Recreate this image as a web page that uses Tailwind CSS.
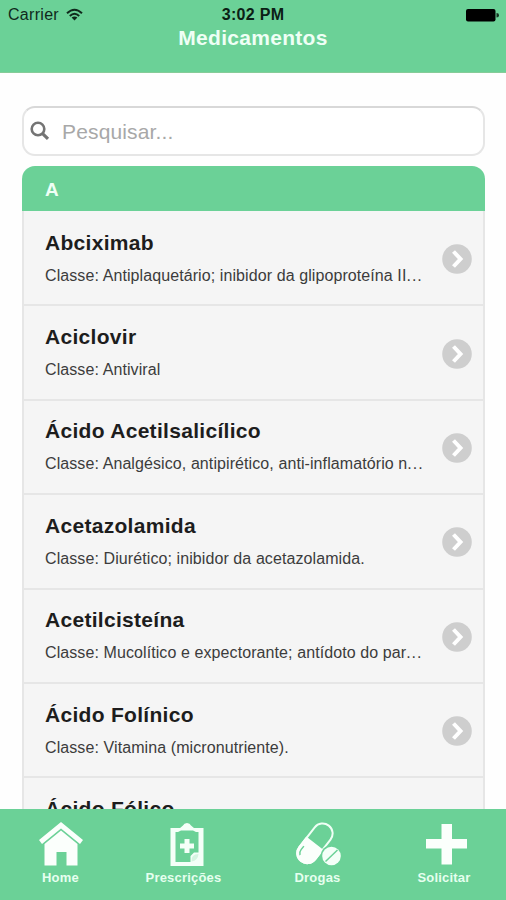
<!DOCTYPE html>
<html lang="pt">
<head>
<meta charset="utf-8">
<title>Medicamentos</title>
<script src="https://cdn.jsdelivr.net/npm/@tailwindcss/browser@4"></script>
</head>
<body class="bg-white">
<div class="flex h-[900px] w-[506px] flex-col overflow-hidden bg-[#fefefe] font-['Liberation_Sans',Arial,sans-serif]">
  <header class="h-[73px] shrink-0 border-b border-[#86cc98] bg-[#6bd197]">
    <div class="grid h-[27px] grid-cols-3 items-center pt-0.5 pr-[7px] pl-[7px] text-[#10291c]">
      <div class="flex items-center gap-[7px] pl-px text-base leading-[26px]">
        <span class="tracking-[0.3px]">Carrier</span>
        <svg class="h-3.5 w-[17px]" viewBox="0 0 17 14" fill="none" stroke="#10291c" stroke-width="2"><path d="M1 5.2Q8.5-1.8 16 5.2M3.8 8Q8.5 3.6 13.2 8"/><path d="M5.6 9.6Q8.5 7.4 11.4 9.6L8.5 12.6Z" fill="#10291c" stroke="none"/></svg>
      </div>
      <div class="text-center text-base font-bold tracking-[0.3px] text-[#0b2015]">3:02 PM</div>
      <svg class="h-[13px] w-[33px] justify-self-end" viewBox="0 0 33 13"><rect x="0" y="0" width="29.5" height="12.5" rx="2" fill="#000"/><path d="M30.5 4Q33 4 33 6.3T30.5 8.6Z" fill="#163322"/></svg>
    </div>
    <h1 class="text-center text-[21px] leading-[22px] font-bold tracking-[0.3px] text-[#effff5]">Medicamentos</h1>
  </header>

  <main class="min-h-0 flex-1 overflow-hidden pt-[33px] pr-[21px] pl-[22px]">
    <div class="flex h-[50px] items-center gap-3 rounded-[13px] border-2 border-[#e6e6e6] border-t-[#d8d8d8] bg-white pl-[6px]">
      <svg class="size-5" viewBox="0 0 20 20" fill="none" stroke="#747474"><circle cx="8" cy="8" r="6.300" stroke-width="2.6"/><path d="M12.3 12.3L18 17.8" stroke-width="3.2"/></svg>
      <span class="pt-0.5 text-[21px] tracking-[0.15px] text-[#a8a8a8]">Pesquisar...</span>
    </div>

    <section class="mt-[10px] overflow-hidden rounded-t-[13px]">
      <h2 class="h-[45px] bg-[#6bd197] pl-[23px] text-[19px] leading-[47px] font-bold text-[#effff5]">A</h2>
      <ul id="list" class="border-x-2 border-[#e6e6e6] bg-[#f5f5f5] pt-px"></ul>
    </section>
  </main>

  <nav class="flex h-[91px] shrink-0 bg-[#6bd197] text-[13px] font-bold text-[#e6ffef]">
    <div class="flex w-[121px] flex-col items-center pt-[13px]">
      <svg class="h-[46px] w-[46px]" viewBox="0 0 46 46" fill="#fbfffc"><path d="M23 0L45 18L42 22L23 6.500L4 22L1 18Z"/><path d="M23 8.500L39.500 22V43.500H28.500V30H18.500V43.500H6.500V22Z"/></svg>
      <span class="leading-5 tracking-[0.2px]">Home</span>
    </div>
    <div class="flex w-[125px] flex-col items-center pt-[13px]">
      <svg class="ml-[7px] h-[46px] w-[36px]" viewBox="0 0 36 46"><path d="M1.500 6H11L14 3.500Q15 1 18 1T22 3.500L25 6H34.500V44H1.500Z" fill="#f4fff8"/><path d="M6.500 10H9L12 8.500H24L27 10H29.500V30.500H25L21.500 34V40H6.500Z" fill="#6bd197"/><path d="M22.500 39.500Q22 32 29.500 32Q29 38.500 22.500 39.500Z" fill="#d5f5e1"/><path d="M15.500 17H20.500V21.500H25V26.500H20.500V31H15.500V26.500H11V21.500H15.500Z" fill="#f4fff8"/></svg>
      <span class="leading-5 tracking-[0.2px]">Prescrições</span>
    </div>
    <div class="flex w-[143px] flex-col items-center pt-[13px]">
      <svg class="h-[46px] w-[46px]" viewBox="0 0 46 46"><g transform="rotate(38 19 22.500)"><rect x="9" y="-1.500" width="20" height="45" rx="10" fill="none" stroke="#effff5" stroke-width="2"/><path d="M8 21H30V33.500A11 11 0 0 1 8 33.500Z" fill="#fbfffc"/><path d="M12 30V34.500Q12 38 14.500 39.500" fill="none" stroke="#6bd197" stroke-width="1.500"/></g><circle cx="36.500" cy="34" r="10.800" fill="#6bd197"/><circle cx="36.500" cy="34" r="9.300" fill="#f4fff8"/><path d="M30.500 39.500L42.500 28" stroke="#6bd197" stroke-width="1.500"/></svg>
      <span class="leading-5 tracking-[0.2px]">Drogas</span>
    </div>
    <div class="flex w-[110px] flex-col items-center pt-[13px]">
      <svg class="ml-[5px] h-[46px] w-[41px]" viewBox="0 0 41 46"><path d="M15.500 2H26V17H41V26.500H26V42.500H15.500V26.500H0V17H15.500Z" fill="#fbfffc"/></svg>
      <span class="leading-5 tracking-[0.2px]">Solicitar</span>
    </div>
  </nav>
</div>
<template id="row">
  <li class="flex h-[94.4px] items-center justify-between border-b-2 border-[#e6e6e6] pr-[11px] pl-[21px]">
    <div class="pt-px">
      <h3 class="text-[21px] leading-[33px] font-bold tracking-[0.3px] whitespace-nowrap text-[#1d1d1d]"></h3>
      <p class="min-h-[33px] text-base leading-[33px] tracking-[0.09px] whitespace-nowrap text-[#3c3c3c]"><span></span><span class="tracking-[1px]"></span></p>
    </div>
    <svg class="mt-0.5 size-[30px] shrink-0" viewBox="0 0 30 30"><circle cx="15" cy="15" r="14.800" fill="#cecece"/><path d="M11.500 7.500L18.500 15L11.500 22.500" fill="none" stroke="#fff" stroke-width="4"/></svg>
  </li>
</template>
<script>
const drugs = [
  ["Abciximab", "Classe: Antiplaquetário; inibidor da glipoproteína II", "..."],
  ["Aciclovir", "Classe: Antiviral", ""],
  ["Ácido Acetilsalicílico", "Classe: Analgésico, antipirético, anti-inflamatório n", "..."],
  ["Acetazolamida", "Classe: Diurético; inibidor da acetazolamida.", ""],
  ["Acetilcisteína", "Classe: Mucolítico e expectorante; antídoto do par", "..."],
  ["Ácido Folínico", "Classe: Vitamina (micronutriente).", ""],
  ["Ácido Fólico", "", ""]
];
const list = document.getElementById("list"), tpl = document.getElementById("row");
for (const [name, info, dots] of drugs) {
  const li = tpl.content.cloneNode(true);
  li.querySelector("h3").textContent = name;
  const [text, tail] = li.querySelectorAll("p span");
  text.textContent = info;
  tail.textContent = dots;
  list.append(li);
}
</script>
</body>
</html>
